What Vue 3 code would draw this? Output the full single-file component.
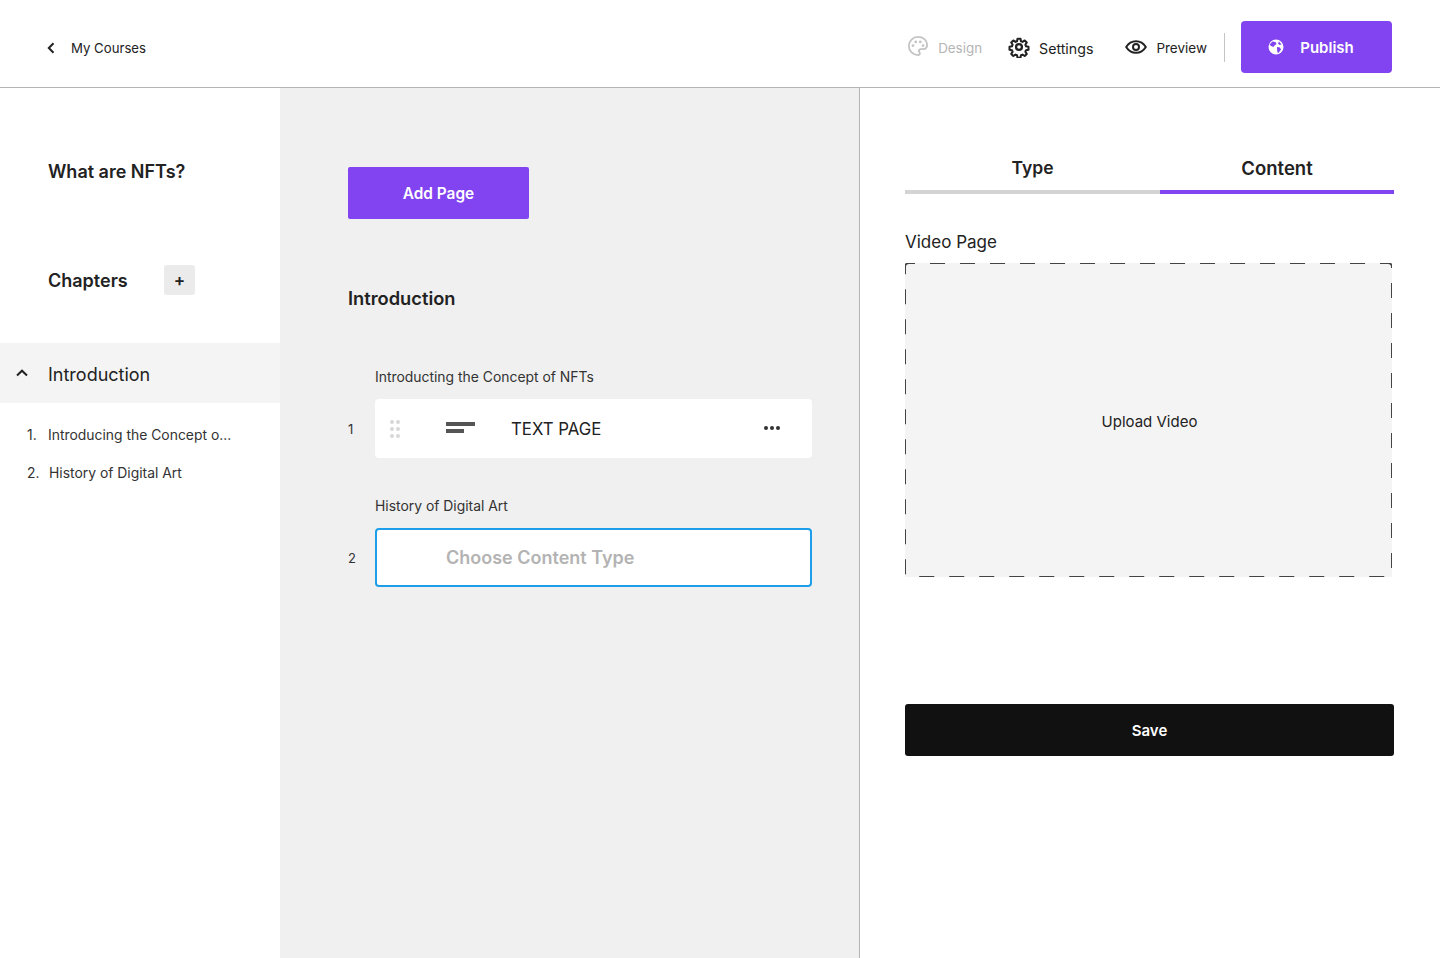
<template>
  <div class="editor">
    <header class="topbar">
      <a class="back">
        <svg width="8" height="12" viewBox="0 0 8 12" fill="none"><path d="M6.5 1.2 1.8 6l4.7 4.8" stroke="#222" stroke-width="2"/></svg>
        <span>My Courses</span>
      </a>
      <nav class="actions">
        <a class="action design">
          <svg width="22" height="22" viewBox="0 0 24 24" fill="none" stroke="#c4c4c4" stroke-width="2"><path d="M12 2C6.500 2 2 6.500 2 12s4.500 10 10 10c1.100 0 2-.9 2-2 0-.5-.2-1-.5-1.300-.3-.4-.5-.8-.5-1.300 0-1.100.9-2 2-2h2.300c3 0 4.700-2.200 4.700-4.800C22 5.700 17.500 2 12 2Z"/><circle cx="6.500" cy="11.500" r="1.500" fill="#c4c4c4" stroke="none"/><circle cx="9.500" cy="7.500" r="1.500" fill="#c4c4c4" stroke="none"/><circle cx="14.500" cy="7.500" r="1.500" fill="#c4c4c4" stroke="none"/><circle cx="17.500" cy="11.500" r="1.500" fill="#c4c4c4" stroke="none"/></svg>
          <span>Design</span>
        </a>
        <a class="action settings">
          <svg width="22" height="22" viewBox="0 0 24 24" fill="none" stroke="#222" stroke-width="2.500" stroke-linejoin="round"><circle cx="12" cy="12" r="3.200"/><path d="M10.200 2h3.600l.6 3 1.900.8 2.600-1.700 2.500 2.500-1.700 2.600.8 1.900 3 .6v3.600l-3 .6-.8 1.900 1.700 2.600-2.500 2.500-2.600-1.700-1.900.8-.6 3h-3.600l-.6-3-1.900-.8-2.600 1.700-2.500-2.500 1.700-2.600-.8-1.900-3-.6v-3.600l3-.6.8-1.900-1.700-2.600 2.500-2.500 2.600 1.700 1.900-.8.600-3Z" transform="translate(1.200 1.200) scale(.9)"/></svg>
          <span>Settings</span>
        </a>
        <a class="action preview">
          <svg width="22" height="14" viewBox="0 0 22 14" fill="none" stroke="#222" stroke-width="2"><path d="M1.200 7C3.500 3.200 7 1.200 11 1.200S18.500 3.200 20.800 7C18.500 10.800 15 12.800 11 12.800S3.500 10.800 1.200 7Z"/><circle cx="11" cy="7" r="3"/></svg>
          <span>Preview</span>
        </a>
        <span class="divider"></span>
        <button class="publish">
          <svg width="16" height="16" viewBox="0 0 16 16"><circle cx="8" cy="8" r="7.500" fill="#fff"/><path d="M4.500 2.500 7.500 3 8.500 5 6.500 6.500 5.500 8 3 7 1.500 5.500ZM9 8l3 .5 1 2-2.500 3.500-1-.5-.5-3ZM11 2.500l2.500 3-2 .5-1.500-1.500Z" fill="#8144f0"/></svg>
          <span>Publish</span>
        </button>
      </nav>
    </header>

    <div class="body">
      <aside class="sidebar">
        <h1 class="course-title">What are NFTs?</h1>
        <div class="chapters-head">
          <h2>Chapters</h2>
          <button class="add-chapter">+</button>
        </div>
        <div class="chapter-row">
          <svg width="12" height="8" viewBox="0 0 12 8" fill="none"><path d="M1 6.500 6 1.700l5 4.800" stroke="#222" stroke-width="2"/></svg>
          <span>Introduction</span>
        </div>
        <ol class="page-list">
          <li v-for="(page, i) in sidebarPages" :key="page">
            <span class="num">{{ i + 1 }}.</span>
            <span>{{ page }}</span>
          </li>
        </ol>
      </aside>

      <main class="pages">
        <button class="add-page">Add Page</button>
        <h2 class="section-title">Introduction</h2>

        <p class="page-label first">Introducting the Concept of NFTs</p>
        <div class="page-row">
          <span class="row-num">1</span>
          <div class="page-card">
            <span class="grip">
              <i v-for="n in 6" :key="n"></i>
            </span>
            <svg class="lines" width="29" height="11" viewBox="0 0 29 11"><rect y="0" width="29" height="4" fill="#555"/><rect y="7" width="18" height="4" fill="#555"/></svg>
            <span class="card-text">TEXT PAGE</span>
            <span class="dots"><i></i><i></i><i></i></span>
          </div>
        </div>

        <p class="page-label second">History of Digital Art</p>
        <div class="page-row">
          <span class="row-num">2</span>
          <div class="page-card selected">
            <span class="placeholder">Choose Content Type</span>
          </div>
        </div>
      </main>

      <section class="inspector">
        <div class="tabs">
          <div class="tab">Type</div>
          <div class="tab active">Content</div>
        </div>
        <h3 class="panel-label">Video Page</h3>
        <div class="upload">Upload Video</div>
        <button class="save">Save</button>
      </section>
    </div>
  </div>
</template>

<script setup>
const sidebarPages = ['Introducing the Concept o...', 'History of Digital Art']
</script>

<style>
html, body { margin: 0; background: #fff; }
</style>

<style scoped>
.editor {
  width: 1440px;
  height: 958px;
  overflow: hidden;
  font-family: Inter, "Liberation Sans", sans-serif;
  color: #222;
  background: #fff;
  display: flex;
  flex-direction: column;
}

/* Top bar */
.topbar {
  height: 87px;
  flex: none;
  box-sizing: content-box;
  border-bottom: 1px solid #b5b5b5;
  display: flex;
  justify-content: space-between;
  align-items: flex-start;
  padding-right: 48px;
}
.back {
  display: flex;
  align-items: center;
  gap: 16px;
  margin: 39px 0 0 47px;
  height: 17px;
  font-size: 13.200px;
}
.actions { display: flex; align-items: flex-start; padding-top: 21px; }
.action {
  display: flex;
  align-items: center;
  gap: 9px;
  height: 52px;
  font-size: 13.500px;
}
.action span { padding-top: 2px; }
.design { color: #b5b5b5; margin-right: 26px; font-size: 13.400px; }
.design svg { margin-top: -2px; }
.settings { margin-right: 32px; font-size: 14.200px; }
.preview { margin-right: 17px; }
.divider { width: 1px; height: 29px; margin-top: 12px; background: #c4c4c4; }
.publish {
  width: 151px;
  height: 52px;
  margin-left: 16px;
  padding: 0 11px 0 0;
  border: 0;
  border-radius: 4px;
  background: #8144f0;
  color: #fff;
  font: 600 15px Inter, sans-serif;
  display: flex;
  align-items: center;
  justify-content: center;
  gap: 16px;
}

.body { flex: 1; display: flex; min-height: 0; }

/* Left column */
.sidebar { width: 280px; flex: none; }
.course-title {
  margin: 73px 0 0 48px;
  font-size: 18px;
  line-height: 22px;
  font-weight: 600;
}
.chapters-head {
  display: flex;
  align-items: center;
  margin: 82px 0 0 48px;
  height: 30px;
}
.chapters-head h2 { margin: 0; font-size: 18px; font-weight: 600; width: 116px; }
.add-chapter {
  width: 31px;
  height: 30px;
  border: 0;
  padding: 0;
  border-radius: 3px;
  background: #ebebeb;
  color: #222;
  font: 600 17px Inter, sans-serif;
}
.chapter-row {
  margin-top: 48px;
  height: 60px;
  background: #f4f4f4;
  display: flex;
  align-items: center;
  gap: 20px;
  padding-left: 16px;
  font-size: 18px;
}
.chapter-row span { padding-top: 2px; }
.page-list { list-style: none; margin: 23px 0 0; padding: 0 0 0 27px; font-size: 13.900px; color: #333; }
.page-list li { height: 38px; display: flex; line-height: 18px; }
.num { width: 21px; }
.page-list li:nth-child(2) .num { width: 22px; }

/* Middle column */
.pages {
  width: 579px;
  flex: none;
  box-sizing: border-box;
  background: #f0f0f0;
  padding: 79px 47px 0 68px;
}
.add-page {
  display: block;
  width: 181px;
  height: 52px;
  border: 0;
  border-radius: 2px;
  background: #8144f0;
  color: #fff;
  font: 600 15.400px Inter, sans-serif;
}
.section-title { margin: 68px 0 0; font-size: 18.300px; line-height: 22px; font-weight: 600; }
.page-label { margin: 0 0 0 27px; font-size: 13.900px; line-height: 18px; color: #333; }
.page-label.first { margin-top: 59px; margin-bottom: 13px; }
.page-label.second { margin-top: 39px; margin-bottom: 13px; }
.page-row { display: flex; align-items: center; }
.row-num { width: 27px; font-size: 13px; color: #333; }
.page-card {
  width: 437px;
  height: 59px;
  box-sizing: border-box;
  background: #fff;
  border-radius: 4px;
  display: flex;
  align-items: center;
  padding-left: 15px;
  padding-right: 32px;
}
.grip {
  width: 10px;
  display: grid;
  grid-template-columns: 4px 4px;
  gap: 3px 2px;
  margin-right: 46px;
}
.grip i { width: 4px; height: 4px; border-radius: 50%; background: #d8d8d8; }
.lines { margin-right: 36px; margin-top: -2px; }
.card-text { font-size: 16.800px; flex: 1; color: #222; }
.dots { display: flex; gap: 2px; margin-top: -2px; }
.dots i { width: 4px; height: 4px; border-radius: 50%; background: #333; }
.selected { border: 2px solid #1c9ee8; padding-left: 69px; }
.placeholder { font-size: 18px; font-weight: 600; color: #b3b3b3; }

/* Right column */
.inspector {
  flex: 1;
  box-sizing: border-box;
  border-left: 1px solid #b5b5b5;
  padding: 68px 46px 0 45px;
}
.tabs { display: flex; width: 489px; }
.tab {
  width: 255px;
  height: 34px;
  box-sizing: content-box;
  border-bottom: 4px solid #d4d4d4;
  text-align: center;
  font-size: 17.500px;
  line-height: 24px;
  font-weight: 600;
}
.tab.active { width: 234px; border-bottom-color: #8144f0; font-size: 18.500px; }
.panel-label { margin: 37px 0 0; font-size: 17px; line-height: 22px; font-weight: 400; }
.upload {
  width: 487px;
  height: 314px;
  margin-top: 10px;
  box-sizing: border-box;
  background-color: #f4f4f4;
  background-image: url("data:image/svg+xml,%3csvg width='100%25' height='100%25' xmlns='http://www.w3.org/2000/svg'%3e%3crect width='100%25' height='100%25' fill='none' rx='4' ry='4' stroke='%23444' stroke-width='2' stroke-dasharray='15%2c 15' stroke-dashoffset='9' stroke-linecap='butt'/%3e%3c/svg%3e");
  display: flex;
  align-items: center;
  justify-content: center;
  font-size: 15px;
  padding: 2px 0 0 2px;
}
.save {
  display: block;
  width: 489px;
  height: 52px;
  margin-top: 127px;
  border: 0;
  border-radius: 3px;
  background: #111;
  color: #fff;
  font: 600 15px Inter, sans-serif;
}
</style>
